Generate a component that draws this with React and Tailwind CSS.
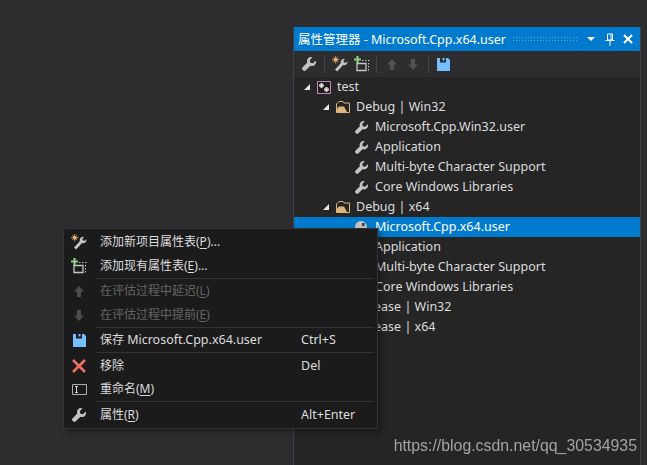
import React from "react";

const font = { fontFamily: '"Noto Sans", "Noto Sans CJK SC", sans-serif' };

const wrenchPath = "M13.700 3.600 11 6.300 8.400 5.700 7.800 3.100 10.500.4A4 4 0 0 0 5.300 5.600L.7 10.200a1.900 1.900 0 0 0 0 2.700l.4.400a1.900 1.900 0 0 0 2.700 0L8.400 8.700A4 4 0 0 0 13.700 3.600z";

const Wrench = ({ size = 14 }) => (
    <svg width={size} height={size} viewBox="0 0 14 14">
        <path d={wrenchPath} fill="#c4c4c4" />
    </svg>
);

const MagicIcon = () => (
    <svg width="16" height="16" viewBox="0 0 16 16">
        <circle cx="3.700" cy="3.700" r="1.800" fill="#f2b36b" />
        <path d="M3.700 0v7.400M0 3.700h7.400M1.200 1.200l5 5M6.200 1.200l-5 5" stroke="#f2b36b" strokeWidth="0.800" fill="none" />
        <path d="M15.500 5.500a3.400 3.400 0 0 1-4.500 3.500L5.200 15.500 3 13.500l5.800-6.300A3.400 3.400 0 0 1 13 3l-1.800 2 1 1.500 1.800.2 1.300-1.500z" fill="#c4c4c4" />
    </svg>
);

const AddIcon = () => (
    <svg width="16" height="16" viewBox="0 0 16 16">
        <path d="M3.500 0v7M0 3.500h7" stroke="#89d185" strokeWidth="2.200" fill="none" />
        <path d="M3 7.500h9v7H3z" stroke="#c4c4c4" strokeWidth="1.300" fill="none" />
        <path d="M8 4.500h1.500M11 4.500h1.500M14 4.500h1.500M14.500 7v1.500M14.500 10v1.500M14.500 13v1.500" stroke="#c4c4c4" strokeWidth="1" fill="none" />
    </svg>
);

const ArrowUp = ({ color = "#525252" }) => (
    <svg width="12" height="13" viewBox="0 0 12 13">
        <path d="M6 1 1 6.500h3V12h4V6.500h3z" fill={color} />
    </svg>
);

const ArrowDown = ({ color = "#525252" }) => (
    <svg width="12" height="13" viewBox="0 0 12 13">
        <path d="M6 12 1 6.500h3V1h4v5.500h3z" fill={color} />
    </svg>
);

const SaveIcon = () => (
    <svg width="13" height="13" viewBox="0 0 13 13">
        <path d="M0 0h3v4.500h6V0h2l2 2v11H0z" fill="#75beff" />
        <path d="M5.500 0h2v2.500h-2z" fill="#75beff" />
    </svg>
);

const CloseIcon = () => (
    <svg width="16" height="16" viewBox="0 0 16 16">
        <path d="M2 2l12 12M14 2 2 14" stroke="#f0705f" strokeWidth="2.600" fill="none" />
    </svg>
);

const RenameIcon = () => (
    <svg width="15" height="11" viewBox="0 0 15 11">
        <path d="M.5.500h14v10H.5z" stroke="#b0b0b0" fill="none" />
        <path d="M3 2.500h3M3 8.500h3M4.500 2.500v6" stroke="#d0d0d0" fill="none" />
    </svg>
);

const Expander = () => (
    <svg width="6" height="6" viewBox="0 0 6 6">
        <path d="M6 0v6H0z" fill="#e8e8e8" />
    </svg>
);

const ProjectIcon = () => (
    <svg width="14" height="13" viewBox="0 0 14 13">
        <path d="M.5.500h13v12H.5z" stroke="#c586c0" fill="#1e1e1e" />
        <path d="M4.500 2v5M2 4.500h5M9.500 6v5M7 8.500h5" stroke="#dedede" strokeWidth="2" fill="none" />
    </svg>
);

const FolderIcon = () => (
    <svg width="14" height="12" viewBox="0 0 14 12">
        <path d="M.5 11.500V3L3 .5h4L8 2h5.500v9.500z" stroke="#dcb67a" fill="#252526" />
        <path d="M1 11V7.500l2-2h5L11 11z" fill="#dcb67a" />
    </svg>
);

const SelectedIcon = () => (
    <svg width="12" height="12" viewBox="0 0 12 12">
        <circle cx="6" cy="6" r="6" fill="#c4c4c4" />
        <path d="M7 2h2.500v3L7 5z" fill="#3a3a3a" />
    </svg>
);

const Row = ({ indent, icon, text, expander, selected }) => (
    <div className={`h-5 flex items-center text-[12.5px] leading-5 whitespace-nowrap ${selected ? "bg-[#007acc] text-white" : "text-[#dcdcdc]"}`}>
        <div style={{ width: indent }} className="shrink-0 flex justify-end pr-[7px]">
            {expander && <Expander />}
        </div>
        <div className="w-[20px] shrink-0 flex items-center">{icon}</div>
        <span>{text}</span>
    </div>
);

const Sep = () => <div className="h-px bg-[#333337] ml-8 mr-[3px]" />;

const Key = ({ children }) => <span className="underline underline-offset-2">{children}</span>;

const MenuItem = ({ icon, children, shortcut, disabled, low }) => (
    <div className={`h-6 flex items-center text-[12px] whitespace-nowrap ${disabled ? "text-[#656565]" : "text-[#dcdcdc]"} ${low ? "pt-[2px]" : ""}`}>
        <div className="w-[36px] pr-[6px] shrink-0 flex justify-center">{icon}</div>
        <div className="w-[201px] shrink-0">{children}</div>
        <div className="text-[12.5px]">{shortcut}</div>
    </div>
);

const ToolSep = () => <div className="w-px h-[18px] bg-[#46464a]" />;

const App = () => {
    return (
        <div className="relative w-[647px] h-[465px] overflow-hidden bg-[#2d2d30] flex pl-[293px] pt-[27px]" style={font}>
            {/* 속성 관리자 패널 */}
            <div className="w-[348px] h-[438px] border-x border-[#3f3f46] flex flex-col">
                <div className="h-6 bg-[#007acc] flex items-center pl-1 text-white text-[12.5px] whitespace-nowrap">
                    <span className="w-[214px] shrink-0 pt-[2px]">属性管理器 - Microsoft.Cpp.x64.user</span>
                    <div className="w-[66px] h-[7px] bg-[radial-gradient(circle,#5aaee6_0.8px,transparent_0.8px)] bg-[length:3px_3px]" />
                    <div className="ml-[9px] w-0 h-0 border-x-[4px] border-x-transparent border-t-[4px] border-t-white" />
                    <svg className="ml-[10px]" width="10" height="13" viewBox="0 0 10 13">
                        <path d="M2.500 1h5v6h-5zM6 1v6M0.500 7.500h9M5 8v5" stroke="#fff" fill="none" />
                    </svg>
                    <svg className="ml-[8px]" width="10" height="10" viewBox="0 0 10 10">
                        <path d="M1 1l8 8M9 1 1 9" stroke="#fff" strokeWidth="2" fill="none" />
                    </svg>
                </div>
                <div className="h-[26px] flex items-center pl-2 shrink-0">
                    <Wrench />
                    <div className="ml-[8px] mr-[7px]"><ToolSep /></div>
                    <MagicIcon />
                    <div className="ml-[6px]"><AddIcon /></div>
                    <div className="ml-[6px] mr-[9px]"><ToolSep /></div>
                    <ArrowUp />
                    <div className="ml-[9px]"><ArrowDown /></div>
                    <div className="ml-[9px] mr-[8px]"><ToolSep /></div>
                    <SaveIcon />
                </div>
                <div className="flex-1 bg-[#252526]">
                    <Row indent={23} expander icon={<ProjectIcon />} text="test" />
                    <Row indent={42} expander icon={<FolderIcon />} text="Debug | Win32" />
                    <Row indent={61} icon={<Wrench size={13} />} text="Microsoft.Cpp.Win32.user" />
                    <Row indent={61} icon={<Wrench size={13} />} text="Application" />
                    <Row indent={61} icon={<Wrench size={13} />} text="Multi-byte Character Support" />
                    <Row indent={61} icon={<Wrench size={13} />} text="Core Windows Libraries" />
                    <Row indent={42} expander icon={<FolderIcon />} text="Debug | x64" />
                    <Row indent={61} selected icon={<SelectedIcon />} text="Microsoft.Cpp.x64.user" />
                    <Row indent={61} icon={<Wrench size={13} />} text="Application" />
                    <Row indent={61} icon={<Wrench size={13} />} text="Multi-byte Character Support" />
                    <Row indent={61} icon={<Wrench size={13} />} text="Core Windows Libraries" />
                    <Row indent={42} icon={<FolderIcon />} text="Release | Win32" />
                    <Row indent={42} icon={<FolderIcon />} text="Release | x64" />
                </div>
            </div>

            {/* 컨텍스트 메뉴 */}
            <div className="absolute left-[63px] top-[228px] w-[315px] h-[201px] bg-[#1b1b1c] border border-[#333337] py-px shadow-[3px_3px_6px_rgba(0,0,0,0.35)]">
                <MenuItem icon={<MagicIcon />}>添加新项目属性表(<Key>P</Key>)...</MenuItem>
                <MenuItem icon={<AddIcon />}>添加现有属性表(<Key>E</Key>)...</MenuItem>
                <Sep />
                <MenuItem disabled icon={<ArrowUp color="#4d4d4d" />}>在评估过程中延迟(<Key>L</Key>)</MenuItem>
                <MenuItem disabled icon={<ArrowDown color="#4d4d4d" />}>在评估过程中提前(<Key>E</Key>)</MenuItem>
                <Sep />
                <MenuItem icon={<SaveIcon />} shortcut="Ctrl+S">保存 <span className="text-[12.5px]">Microsoft.Cpp.x64.user</span></MenuItem>
                <Sep />
                <MenuItem low icon={<CloseIcon />} shortcut="Del">移除</MenuItem>
                <MenuItem icon={<RenameIcon />}>重命名(<Key>M</Key>)</MenuItem>
                <Sep />
                <MenuItem low icon={<Wrench />} shortcut="Alt+Enter">属性(<Key>R</Key>)</MenuItem>
            </div>

            {/* 워터마크 */}
            <div className="absolute right-[10px] bottom-[9px] text-[15.87px] leading-5 text-[#a3a3a3] blur-[0.4px]" style={{ fontFamily: '"Liberation Sans", sans-serif' }}>
                https://blog.csdn.net/qq_30534935
            </div>
        </div>
    );
};

export default App;
